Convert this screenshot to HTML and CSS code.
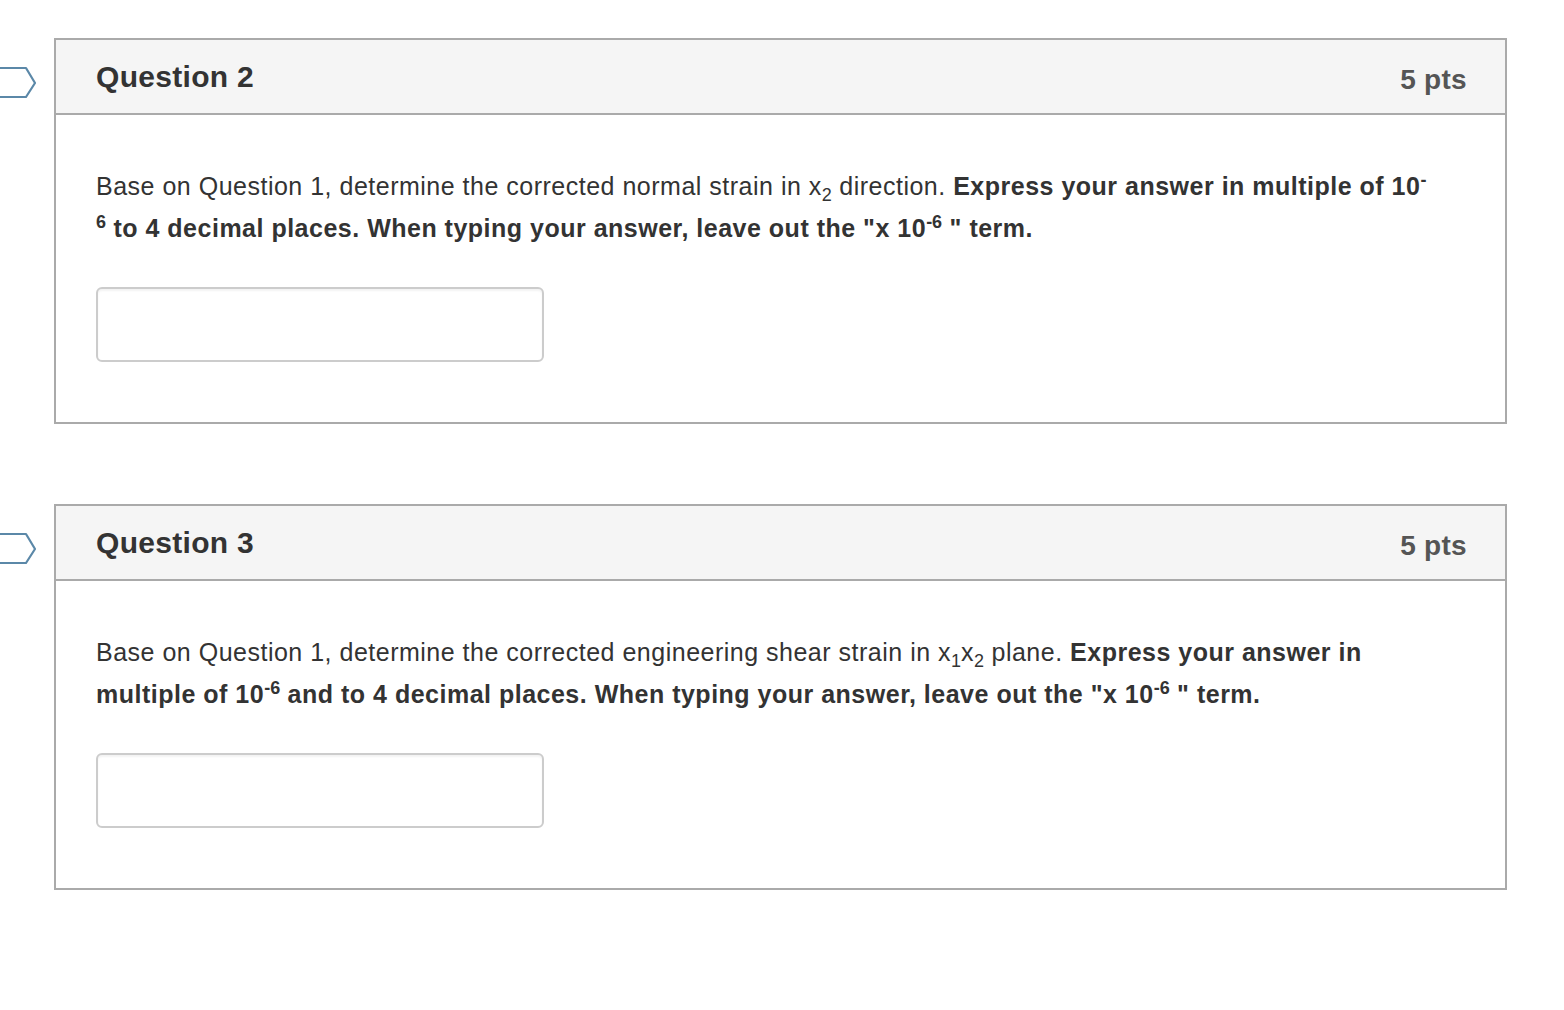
FILE: index.html
```html
<!DOCTYPE html>
<html lang="en">
<head>
  <meta charset="UTF-8">
  <meta name="viewport" content="width=device-width, initial-scale=1.0">
  <title>Quiz</title>
  <link rel="stylesheet" href="styles.css">
</head>
<body>
  <main class="quiz">
    <section class="pregunta">
      <svg class="marcador" width="40" height="38" viewBox="0 0 40 38">
        <path d="M-4 4 H26 L35 19 L26 33 H-4" fill="none" stroke="#5b88a8" stroke-width="2.2" stroke-linejoin="round"/>
      </svg>
      <header class="cabecera">
        <h2>Question 2</h2>
        <span class="puntos">5 pts</span>
      </header>
      <div class="cuerpo">
        <p>Base on Question 1, determine the corrected normal strain in x<sub>2</sub> direction. <strong>Express your answer in multiple of 10<sup>-</sup><br><sup>6</sup> to 4 decimal places. When typing your answer, leave out the "x 10<sup>-6</sup> " term.</strong></p>
        <input type="text" class="respuesta">
      </div>
    </section>

    <section class="pregunta">
      <svg class="marcador" width="40" height="38" viewBox="0 0 40 38">
        <path d="M-4 4 H26 L35 19 L26 33 H-4" fill="none" stroke="#5b88a8" stroke-width="2.2" stroke-linejoin="round"/>
      </svg>
      <header class="cabecera">
        <h2>Question 3</h2>
        <span class="puntos">5 pts</span>
      </header>
      <div class="cuerpo">
        <p>Base on Question 1, determine the corrected engineering shear strain in x<sub>1</sub>x<sub>2</sub> plane. <strong>Express your answer in multiple of 10<sup>-6</sup> and to 4 decimal places. When typing your answer, leave out the "x 10<sup>-6</sup> " term.</strong></p>
        <input type="text" class="respuesta">
      </div>
    </section>
  </main>
</body>
</html>
```

FILE: styles.css
```css
body {
  margin: 0;
  padding: 0;
  background: #fff;
  font-family: "Liberation Sans", Arial, sans-serif;
  color: #333;
}

.quiz {
  display: flex;
  flex-direction: column;
  gap: 80px;
  padding: 38px 57px 0 54px;
}

.pregunta {
  position: relative;
  border: 2px solid #aaa;
}

.marcador {
  position: absolute;
  left: -56px;
  top: 24px;
}

.cabecera {
  display: flex;
  align-items: center;
  justify-content: space-between;
  height: 73px;
  padding: 0 38px 0 40px;
  background-color: #f5f5f5;
  border-bottom: 2px solid #aaa;
}

.cabecera h2 {
  margin: 0;
  font-size: 30px;
  letter-spacing: 0.3px;
  font-weight: bold;
  color: #333;
}

.puntos {
  margin-top: 7px;
  font-size: 28px;
  letter-spacing: 0.3px;
  font-weight: bold;
  color: #555;
}

.cuerpo {
  padding: 50px 40px 60px;
}

.cuerpo p {
  margin: 0 0 38px;
  font-size: 25px;
  letter-spacing: 0.5px;
  line-height: 42px;
}

.cuerpo strong {
  color: #333;
}

sub, sup {
  font-size: 18px;
  line-height: 1;
  letter-spacing: 0;
}

.respuesta {
  display: block;
  box-sizing: border-box;
  width: 448px;
  height: 75px;
  border: 2px solid #ccc;
  border-radius: 6px;
  box-shadow: inset 0 2px 2px rgba(0, 0, 0, 0.05);
}
```
